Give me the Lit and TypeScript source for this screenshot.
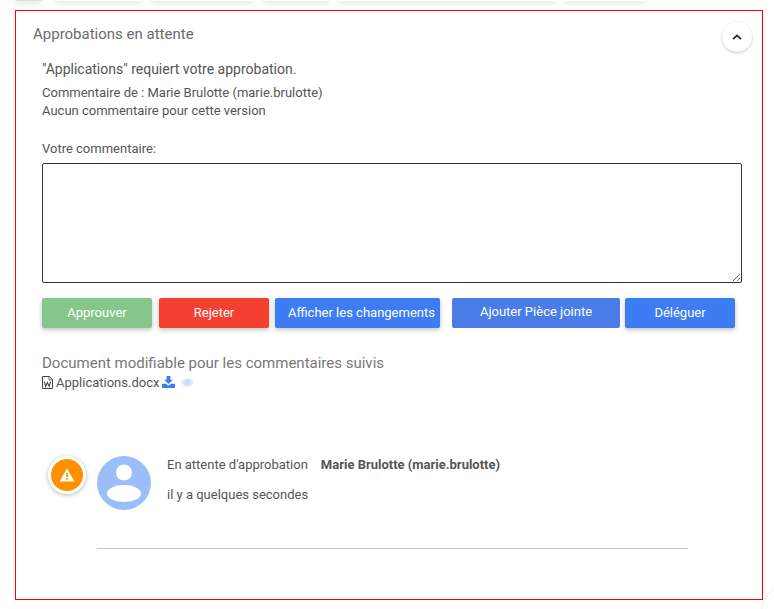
import { LitElement, html, css } from "lit";
import { customElement } from "lit/decorators.js";

const chips = [
  [27, 15],
  [87, 13],
  [102, 9],
  [67, 10],
  [218, 8],
  [83, 8],
];

@customElement("app-root")
export class AppRoot extends LitElement {
  static styles = css`
    :host {
      display: block;
      width: 774px;
      height: 609px;
      overflow: hidden;
      position: relative;
      background: #fff;
      font-family: Roboto, "Liberation Sans", sans-serif;
      color: #555;
    }
    .chips { display: flex; height: 1px; }
    .chip {
      height: 1px;
      background: #fff;
      border-radius: 0 0 3px 3px;
      box-shadow: 0 1px 5px rgba(0, 0, 0, 0.4);
    }
    .chip.first { background: #ddd; box-shadow: 0 1px 6px rgba(0, 0, 0, 0.45); }
    .panel {
      position: relative;
      box-sizing: border-box;
      width: 748px;
      height: 590px;
      margin: 9px 0 0 15px;
      border: 1px solid #f00;
      padding: 14px 0 0 26px;
    }
    .title {
      margin-left: -9px;
      font-size: 15px;
      line-height: 18px;
      color: #6b6b6b;
    }
    .toggle {
      position: absolute;
      top: 11px;
      right: 10px;
      width: 30px;
      height: 30px;
      border-radius: 50%;
      background: #fff;
      box-shadow: 0 1px 3px rgba(0, 0, 0, 0.22);
      display: flex;
      align-items: center;
      justify-content: center;
    }
    .request {
      margin-top: 18px;
      font-size: 14px;
      line-height: 17px;
      color: #555;
    }
    .meta { margin-top: 6px; font-size: 13px; line-height: 18px; color: #555; }
    .label { margin-top: 20px; font-size: 13px; line-height: 17px; color: #555; }
    textarea {
      display: block;
      box-sizing: border-box;
      width: 700px;
      height: 120px;
      margin-top: 6px;
      border: 1px solid #333;
      border-radius: 2px;
      padding: 4px;
      background: #fff;
      font: inherit;
    }
    .actions { display: flex; margin-top: 15px; }
    .btn {
      box-sizing: border-box;
      height: 30px;
      border: 0;
      border-radius: 2px;
      color: #fff;
      font-family: inherit;
      font-size: 13px;
      padding: 0 0 1px;
      box-shadow: 0 2px 5px rgba(0, 0, 0, 0.24);
      display: flex;
      align-items: center;
      justify-content: center;
    }
    .green { width: 110px; background: #86c68a; margin-right: 7px; }
    .red { width: 110px; background: #f44030; margin-right: 6px; }
    .blue { background: #3d7cf3; }
    .show { width: 165px; margin-right: 12px; padding-left: 8px; }
    .attach {
      width: 168px;
      margin-right: 5px;
      background: #4a7ce8;
      box-shadow: none;
      padding-bottom: 3px;
    }
    .delegate { width: 110px; }
    .doc-title {
      margin-top: 26px;
      font-size: 15px;
      line-height: 18px;
      color: #777;
    }
    .file {
      display: flex;
      align-items: center;
      margin-top: 1px;
      height: 18px;
      font-size: 13px;
      color: #555;
    }
    .file .word { margin-right: 3px; }
    .file .down { margin: 0 6px 0 3px; }
    .timeline {
      display: flex;
      align-items: flex-start;
      margin: 65px 0 0 6px;
    }
    .alert {
      box-sizing: border-box;
      width: 38px;
      height: 38px;
      border-radius: 50%;
      border: 3px solid #fff;
      background: #ff9100;
      box-shadow: 0 1px 4px rgba(0, 0, 0, 0.3);
      display: flex;
      align-items: center;
      justify-content: center;
      flex: none;
    }
    .avatar { flex: none; display: block; margin-left: 11px; }
    .body { margin-left: 16px; font-size: 13px; color: #555; line-height: 17px; }
    .status { display: flex; }
    .status b { margin-left: 13px; font-weight: 700; color: #555; }
    .when { margin-top: 13px; }
    .rule {
      width: 591px;
      height: 1px;
      margin: 38px 0 0 55px;
      background: #c4c4c4;
    }
    .edge {
      position: absolute;
      left: 762px;
      top: 586px;
      width: 52px;
      height: 52px;
      border-radius: 50%;
      box-shadow: 0 0 3px rgba(0, 0, 0, 0.16);
    }
  `;

  render() {
    return html`
      <div class="chips">
        ${chips.map(
          ([w, m], i) =>
            html`<div class="chip ${i === 0 ? "first" : ""}" style="width:${w}px;margin-left:${m}px"></div>`
        )}
      </div>
      <section class="panel">
        <div class="title">Approbations en attente</div>
        <div class="toggle">
          <svg width="12" height="8" viewBox="0 0 12 8">
            <path d="M2 6.2 6 2.4l4 3.8" fill="none" stroke="#222" stroke-width="1.7" />
          </svg>
        </div>
        <div class="request">"Applications" requiert votre approbation.</div>
        <div class="meta">
          Commentaire de : Marie Brulotte (marie.brulotte)<br />
          Aucun commentaire pour cette version
        </div>
        <div class="label">Votre commentaire:</div>
        <textarea></textarea>
        <div class="actions">
          <button class="btn green">Approuver</button>
          <button class="btn red">Rejeter</button>
          <button class="btn blue show">Afficher les changements</button>
          <button class="btn attach">Ajouter Pièce jointe</button>
          <button class="btn blue delegate">Déléguer</button>
        </div>
        <div class="doc-title">Document modifiable pour les commentaires suivis</div>
        <div class="file">
          <svg class="word" width="11" height="13" viewBox="0 0 11 13">
            <path d="M.5.5h6.8l3.2 3.2v8.8H.5z" fill="#fff" stroke="#444" />
            <path d="M7 .7v3.2h3.3" fill="none" stroke="#444" stroke-width=".8" />
            <path d="M2.4 5.6 3.6 10.5 5.4 6.6 7.2 10.5 8.6 5.6" fill="none" stroke="#444" stroke-width="1.1" />
          </svg>
          <span>Applications.docx</span>
          <svg class="down" width="13" height="12" viewBox="0 0 13 12">
            <path d="M4.6 0h3.800v3.800h2.400L6.500 8 2.200 3.800h2.400z" fill="#3d7cf3" />
            <path d="M0 7.800h3.800l2.700 2 2.700-2H13V12H0z" fill="#3d7cf3" />
          </svg>
          <svg width="13" height="9" viewBox="0 0 14 10">
            <path d="M0 5c1.700-3 4.100-4.600 7-4.600S12.300 2 14 5c-1.700 3-4.100 4.600-7 4.600S1.700 8 0 5z" fill="#dce8fc" />
            <circle cx="7" cy="5" r="2.700" fill="#c6daf9" />
          </svg>
        </div>
        <div class="timeline">
          <div class="alert">
            <svg width="16" height="14" viewBox="0 0 18 16">
              <path d="M9 .5 17.500 15.500H.5z" fill="#fff" />
              <rect x="8" y="5.500" width="2" height="5" fill="#ff9100" />
              <rect x="8" y="11.500" width="2" height="2" fill="#ff9100" />
            </svg>
          </div>
          <svg class="avatar" width="54" height="54" viewBox="0 0 54 54">
            <circle cx="27" cy="27" r="27" fill="#9bbefa" />
            <circle cx="27" cy="16.500" r="8" fill="#fff" />
            <ellipse cx="27" cy="37.500" rx="17" ry="8.500" fill="#fff" />
          </svg>
          <div class="body">
            <div class="status"><span>En attente d'approbation</span><b>Marie Brulotte (marie.brulotte)</b></div>
            <div class="when">il y a quelques secondes</div>
          </div>
        </div>
        <div class="rule"></div>
      </section>
      <div class="edge"></div>
    `;
  }
}
